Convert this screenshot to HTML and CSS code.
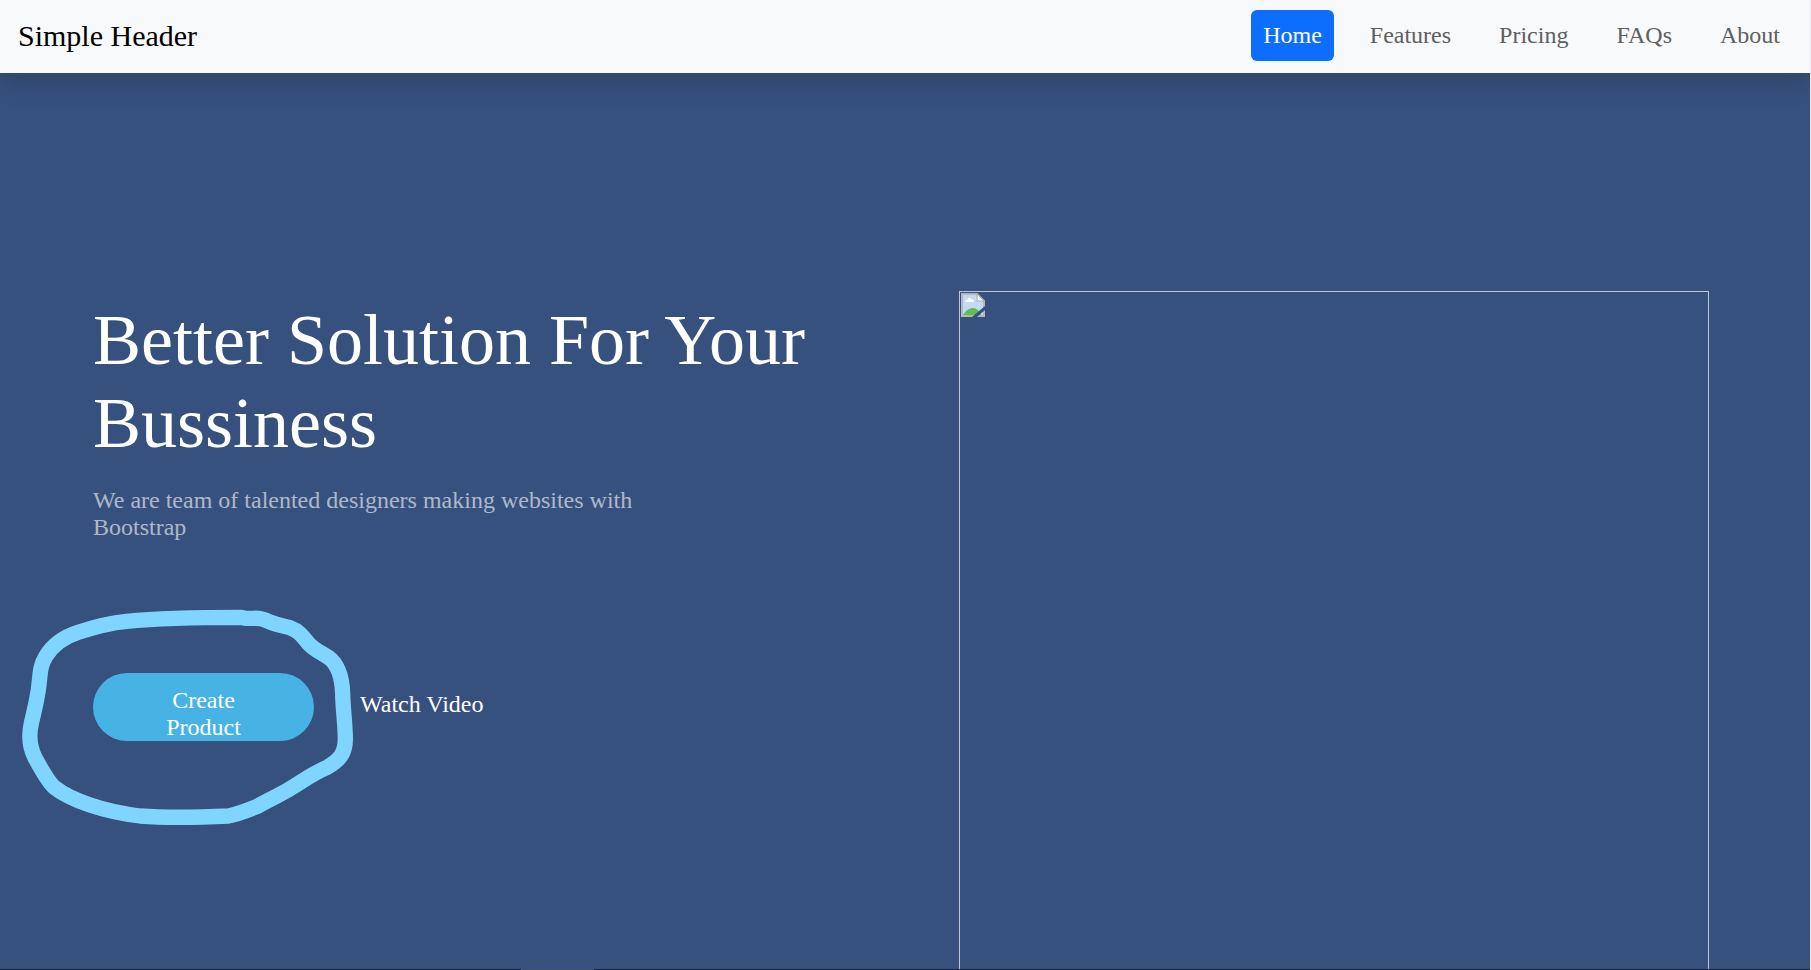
FILE: index.html
```html
<!DOCTYPE html>
<html lang="en">
<head>
<meta charset="utf-8">
<meta name="viewport" content="width=device-width, initial-scale=1">
<title>Simple Header</title>
<link rel="stylesheet" href="styles.css">
</head>
<body>
<div class="page">
  <header class="header">
    <a class="brand" href="#">Simple Header</a>
    <nav class="nav">
      <a class="nav-link active" href="#" aria-current="page">Home</a>
      <a class="nav-link" href="#">Features</a>
      <a class="nav-link" href="#">Pricing</a>
      <a class="nav-link" href="#">FAQs</a>
      <a class="nav-link" href="#">About</a>
    </nav>
  </header>
  <main class="hero">
    <section class="intro">
      <h1 class="title">Better Solution For Your Bussiness</h1>
      <p class="lead">We are team of talented designers making websites with Bootstrap</p>
      <div class="actions">
        <button class="create" type="button">Create Product</button>
        <a class="watch" href="#">Watch Video</a>
        <svg class="ink" viewBox="0 0 1560 750" aria-hidden="true">
          <path d="M725 82C600 82 480 84 380 94C325 99 280 112 235 127C185 143 155 170 137 200C118 232 122 250 115 300C107 350 102 365 94 400C85 440 88 470 105 503C125 540 142 573 163 592C210 630 310 665 420 678C500 684 600 682 685 678C710 673 740 662 770 650C810 628 850 610 880 590C920 565 945 547 980 533C1020 510 1035 490 1036 450C1036 400 1028 350 1028 310C1026 260 1013 222 985 202C960 185 943 180 925 160C905 135 895 122 870 113C850 107 832 105 815 98C780 82 775 85 750 85Q735 86 725 82Z"/>
        </svg>
      </div>
    </section>
    <div class="picture">
      <svg class="broken" viewBox="0 0 24 24" role="img" aria-label="Image not loaded">
        <path d="M1 1H16L23 8V23H1Z" fill="#c3d9f7"/>
        <path d="M4 9Q4 7 6 7Q8 3 10 6Q13 6 13 9Z" fill="#fff"/>
        <path d="M2 22Q6 15 12 15Q17 15 20 22Z" fill="#5fbf4a"/>
        <path d="M1 1H16L23 8V23H1Z" fill="none" stroke="#b4b7bb" stroke-width="2"/>
        <path d="M16 1V8H23Z" fill="#fff" stroke="#a5a8ac" stroke-width="1"/>
        <path d="M11 24L24 13V17L16 24Z" fill="#37517e"/>
      </svg>
    </div>
  </main>
  <div class="scrollbar"><div class="thumb"></div></div>
</div>
</body>
</html>
```
FILE: styles.css
```css
* {
  box-sizing: border-box;
}

body {
  margin: 0;
  background: #e9ebef;
  font-family: "Liberation Serif", "Times New Roman", serif;
  font-size: 24px;
}

a {
  color: inherit;
  text-decoration: none;
}

.page {
  display: flex;
  flex-direction: column;
  height: 100vh;
  margin-right: 1px;
  overflow: hidden;
  background: #37517e;
}

.header {
  display: flex;
  align-items: center;
  justify-content: space-between;
  padding: 10px 18px 12px;
  background: #f8f9fa;
  box-shadow: 0 12px 24px rgba(0, 0, 0, 0.15);
}

.brand {
  color: #000;
  font-size: 30px;
}

.nav {
  display: flex;
  gap: 24px;
}

.nav-link {
  padding: 12px;
  border-radius: 6px;
  color: #5f6061;
  line-height: 27px;
}

.nav-link.active {
  background: #0d6efd;
  color: #fff;
}

.hero {
  flex: 1;
  min-height: 0;
  display: grid;
  grid-template-columns: 1fr 1fr;
  gap: 116px;
  padding: 218px 101px 0 93px;
}

.intro {
  padding-top: 8px;
}

.title {
  margin: 0;
  color: #fff;
  font-size: 72px;
  font-weight: 400;
  line-height: 83px;
}

.lead {
  max-width: 600px;
  margin: 22px 0 132px;
  color: rgba(255, 255, 255, 0.6);
  line-height: 27px;
}

.actions {
  position: relative;
  display: flex;
  align-items: center;
  gap: 46px;
}

.create {
  width: 221px;
  height: 68px;
  padding: 14px 60px 0;
  border: 0;
  border-radius: 34px;
  background: #47b2e4;
  color: #fff;
  font: inherit;
  line-height: 27px;
}

.watch {
  padding-bottom: 6px;
  color: #fff;
}

/* Freehand ring drawn around the main button */
.ink {
  position: absolute;
  left: -93px;
  top: -83px;
  width: 520px;
  height: 250px;
  fill: none;
  stroke: #80d5ff;
  stroke-width: 46;
  stroke-linejoin: round;
  pointer-events: none;
}

.picture {
  height: 750px;
  padding: 1px;
  border: 1px solid #c0c7d3;
}

.broken {
  display: block;
  width: 24px;
  height: 24px;
}

.scrollbar {
  height: 1px;
  padding-left: 521px;
  background: #1d2238;
}

.thumb {
  width: 73px;
  height: 1px;
  background: #4d5260;
}
```
